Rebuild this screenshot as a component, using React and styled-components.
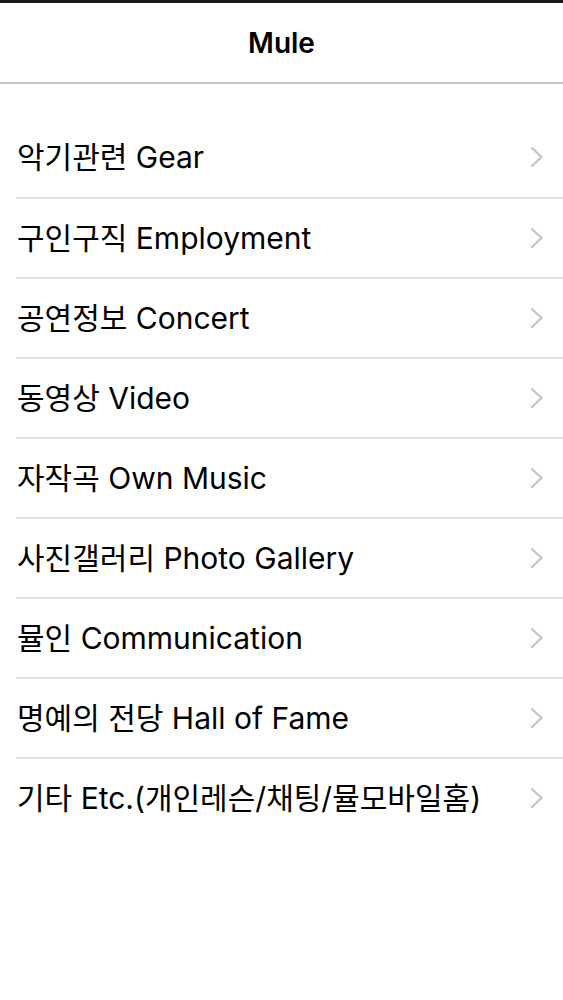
import React from "react"
import styled, { createGlobalStyle } from "styled-components"

const GlobalStyle = createGlobalStyle`
  html, body {
    margin: 0;
    padding: 0;
    background: #fff;
  }
  body {
    font-family: "Inter", "Noto Sans CJK KR", sans-serif;
    color: #000;
  }
`

const Screen = styled.div`
  width: 563px;
  min-height: 1000px;
  background: #fff;
  border-top: 3px solid #1a1a1a;
  box-sizing: border-box;
`

const NavBar = styled.header`
  height: 79px;
  display: flex;
  align-items: center;
  justify-content: center;
  border-bottom: 2px solid #c4c4c4;
`

const NavTitle = styled.h1`
  margin: 0;
  font-size: 28px;
  font-weight: 600;
  letter-spacing: 0;
`

const Menu = styled.ul`
  list-style: none;
  margin: 33px 0 0;
  padding: 0;
`

const MenuRow = styled.li`
  height: 80px;
  margin-left: 16px;
  padding-right: 19px;
  display: flex;
  align-items: center;
  justify-content: space-between;
  border-top: ${(p) => (p.first ? "none" : "2px solid #e0e0e0")};
  box-sizing: border-box;
`

const RowLabel = styled.span`
  font-size: 30px;
  padding-left: 1px;
  padding-bottom: 4px;
  white-space: nowrap;
`

const Chevron = () => (
  <svg width="14" height="22" viewBox="0 0 14 22" fill="none">
    <path d="M2 2l9.5 9L2 20" stroke="#c4c4c8" strokeWidth="2.4" strokeLinecap="round" strokeLinejoin="round" />
  </svg>
)

const items = [
  "악기관련 Gear",
  "구인구직 Employment",
  "공연정보 Concert",
  "동영상 Video",
  "자작곡 Own Music",
  "사진갤러리 Photo Gallery",
  "뮬인 Communication",
  "명예의 전당 Hall of Fame",
  "기타 Etc.(개인레슨/채팅/뮬모바일홈)",
]

export default function App() {
  return (
    <>
      <GlobalStyle />
      <Screen>
        <NavBar>
          <NavTitle>Mule</NavTitle>
        </NavBar>
        <Menu>
          {items.map((label, i) => (
            <MenuRow key={label} first={i === 0}>
              <RowLabel>{label}</RowLabel>
              <Chevron />
            </MenuRow>
          ))}
        </Menu>
      </Screen>
    </>
  )
}
